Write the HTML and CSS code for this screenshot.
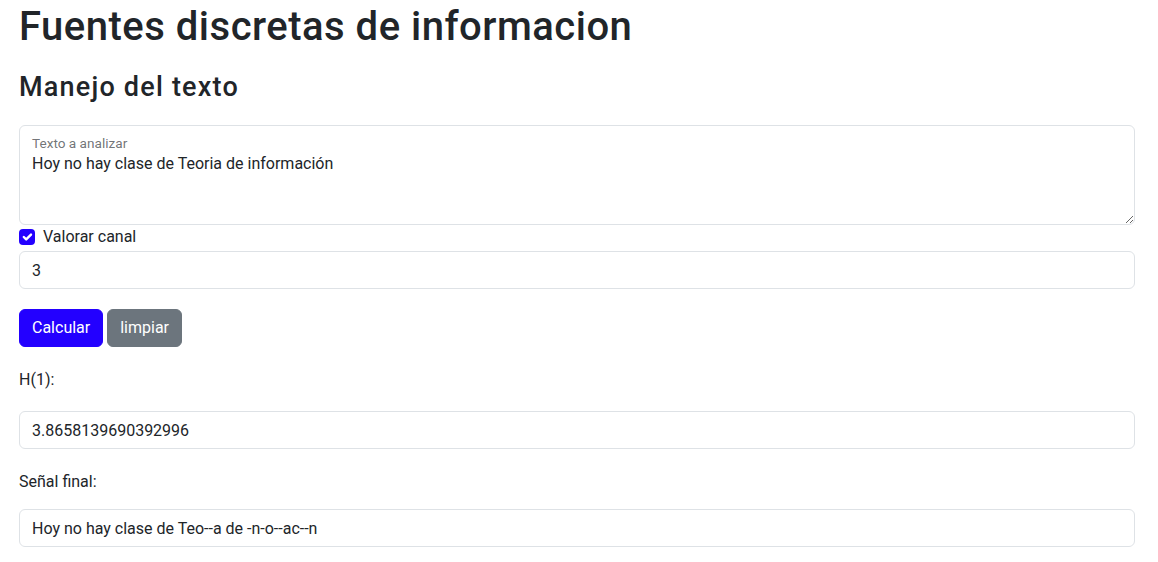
FILE: index.html
```html
<!DOCTYPE html>
<html lang="es">
<head>
<meta charset="utf-8">
<title>Fuentes discretas de informacion</title>
<link rel="stylesheet" href="styles.css">
</head>
<body>
<main class="page">
  <h1 class="title">Fuentes discretas de informacion</h1>
  <h4 class="subtitle">Manejo del texto</h4>

  <div class="floating">
    <textarea class="field area" id="texto">Hoy no hay clase de Teoria de información</textarea>
    <label class="float-label" for="texto">Texto a analizar</label>
  </div>

  <div class="check">
    <span class="check-box">
      <svg viewBox="0 0 20 20" width="16" height="16"><path d="M6 10l3 3l6-6" fill="none" stroke="#fff" stroke-width="3" stroke-linecap="round" stroke-linejoin="round"/></svg>
    </span>
    <span class="check-label">Valorar canal</span>
  </div>

  <input class="field" type="text" value="3">

  <div class="actions">
    <button class="btn btn-primary">Calcular</button>
    <button class="btn btn-secondary">limpiar</button>
  </div>

  <p class="label label-h">H(1):</p>
  <input class="field" type="text" value="3.8658139690392996">

  <p class="label label-s">Señal final:</p>
  <input class="field" type="text" value="Hoy no hay clase de Teo--a de -n-o--ac--n">
</main>
</body>
</html>
```
FILE: styles.css
```css
* { box-sizing: border-box; }
html, body { margin: 0; padding: 0; background: #fff; }
body {
  font-family: "Roboto", "Liberation Sans", sans-serif;
  font-size: 16px;
  line-height: 24px;
  color: #212529;
}
.page {
  padding: 3px 23px 0 19px;
  display: flex;
  flex-direction: column;
}
.title {
  margin: 0;
  font-size: 40px;
  line-height: 48px;
  letter-spacing: 0.5px;
  font-weight: 500;
}
.subtitle {
  margin: 20px 0 22px 0;
  font-size: 27px;
  line-height: 32px;
  letter-spacing: 1.2px;
  font-weight: 500;
}
.floating { position: relative; }
.field {
  display: block;
  width: 100%;
  height: 38px;
  padding: 6px 12px;
  font-family: "Roboto", "Liberation Sans", sans-serif;
  font-size: 16px;
  line-height: 24px;
  color: #212529;
  background: #fff;
  border: 1px solid #dee2e6;
  border-radius: 6px;
  outline: none;
}
.area {
  height: 100px;
  padding: 26px 12px 10px 12px;
  resize: vertical;
}
.float-label {
  position: absolute;
  left: 13px;
  top: 8px;
  font-size: 13.6px;
  line-height: 20px;
  color: rgba(33, 37, 41, 0.65);
}
.check {
  display: flex;
  align-items: center;
  height: 24px;
  margin-bottom: 2px;
}
.check-box {
  width: 16px;
  height: 16px;
  border-radius: 4px;
  background: #2300ff;
  display: flex;
  align-items: center;
  justify-content: center;
}
.check-box svg { display: block; }
.check-label { margin-left: 8px; }
.actions {
  display: flex;
  gap: 4px;
  margin-top: 20px;
}
.btn {
  height: 38px;
  padding: 6px 12px;
  font-family: "Roboto", "Liberation Sans", sans-serif;
  font-size: 16px;
  line-height: 24px;
  color: #fff;
  border: 1px solid transparent;
  border-radius: 6px;
}
.btn-primary { background: #2300ff; border-color: #2300ff; }
.btn-secondary { background: #6c757d; border-color: #6c757d; }
.label { margin: 21px 0 0 0; }
.label-h { margin-bottom: 19px; }
.label-s { margin-bottom: 15px; }
```
